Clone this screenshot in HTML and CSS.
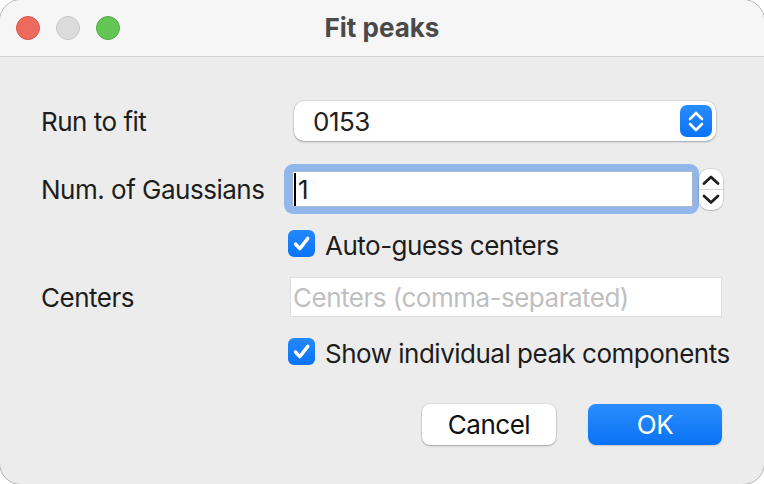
FILE: index.html
```html
<!DOCTYPE html>
<html>
<head>
<meta charset="utf-8">
<link rel="stylesheet" href="styles.css">
</head>
<body>
<div class="window">
  <div class="titlebar">
    <div class="lights">
      <span class="light red"></span>
      <span class="light gray"></span>
      <span class="light green"></span>
    </div>
    <div class="title">Fit peaks</div>
    <div></div>
  </div>
  <div class="content">
    <div class="row row1">
      <div class="label">Run to fit</div>
      <div class="popup">
        <span class="popup-text">0153</span>
        <span class="popup-arrows">
          <svg width="32" height="32" viewBox="0 0 32 32"><path d="M10 14 L16 8 L22 14 M10 19 L16 25 L22 19" fill="none" stroke="#fff" stroke-width="2.6" stroke-linecap="round" stroke-linejoin="round"/></svg>
        </span>
      </div>
    </div>
    <div class="row row2">
      <div class="label">Num. of Gaussians</div>
      <div class="focus-ring">
        <div class="field"><span class="caret"></span>1</div>
      </div>
      <div class="stepper">
        <svg width="24" height="41" viewBox="0 0 24 41"><path d="M5 14.5 L12 8 L19 14.5" fill="none" stroke="#1f1f1f" stroke-width="2.8" stroke-linecap="round" stroke-linejoin="round"/><path d="M5 27 L12 33.5 L19 27" fill="none" stroke="#1f1f1f" stroke-width="2.8" stroke-linecap="round" stroke-linejoin="round"/></svg>
      </div>
    </div>
    <div class="row row3">
      <div class="label"></div>
      <label class="check">
        <span class="box"><svg width="27" height="27" viewBox="0 0 27 27"><path d="M7.5 14 L11.8 18.6 L19.8 8.4" fill="none" stroke="#fff" stroke-width="3.4" stroke-linecap="round" stroke-linejoin="round"/></svg></span>
        <span class="check-text">Auto-guess centers</span>
      </label>
    </div>
    <div class="row row4">
      <div class="label">Centers</div>
      <div class="text-field"><span class="placeholder">Centers (comma-separated)</span></div>
    </div>
    <div class="row row5">
      <div class="label"></div>
      <label class="check">
        <span class="box"><svg width="27" height="27" viewBox="0 0 27 27"><path d="M7.5 14 L11.8 18.6 L19.8 8.4" fill="none" stroke="#fff" stroke-width="3.4" stroke-linecap="round" stroke-linejoin="round"/></svg></span>
        <span class="check-text">Show individual peak components</span>
      </label>
    </div>
    <div class="buttons">
      <button class="btn cancel">Cancel</button>
      <button class="btn ok">OK</button>
    </div>
  </div>
</div>
</body>
</html>
```
FILE: styles.css
```css
* { box-sizing: border-box; }
html, body {
  margin: 0;
  padding: 0;
  background: #ffffff;
  overflow: hidden;
  width: 764px;
  height: 484px;
}
body {
  font-family: Inter, "Liberation Sans", Arial, sans-serif;
  font-size: 26px;
  letter-spacing: -0.5px;
  color: #1d1d1d;
}
.window {
  margin: -1px;
  width: 766px;
  height: 486px;
  border: 1px solid #b4b4b4;
  border-radius: 22px;
  overflow: hidden;
  background: #ececec;
}
.titlebar {
  height: 57px;
  background: #f6f6f6;
  border-bottom: 1px solid #d3d3d3;
  display: grid;
  grid-template-columns: 1fr auto 1fr;
  align-items: center;
}
.lights {
  display: flex;
  gap: 16px;
  padding-left: 16px;
}
.light {
  width: 24px;
  height: 24px;
  border-radius: 50%;
  border: 1px solid;
}
.red { background: #ee6a5f; border-color: #d4574c; }
.gray { background: #dcdcdc; border-color: #c6c6c6; }
.green { background: #62c554; border-color: #52ab45; }
.title {
  font-weight: 700;
  font-size: 26px;
  letter-spacing: 0;
  color: #4a4a4a;
  padding-bottom: 2px;
}
.content {
  padding: 44px 0 0 41px;
}
.row {
  display: flex;
  align-items: center;
}
.label {
  width: 243px;
  flex: none;
  color: #1d1d1d;
}
.row1 { height: 40px; }
.row2 { height: 50px; margin-top: 23px; }
.row3 { height: 27px; margin-top: 16px; }
.row4 { height: 40px; margin-top: 20px; }
.row5 { height: 27px; margin-top: 21px; }

.popup {
  margin-left: 10px;
  width: 422px;
  height: 40px;
  background: #ffffff;
  border-radius: 10px;
  box-shadow: 0 1px 2px rgba(0,0,0,0.28), 0 0 0 0.5px rgba(0,0,0,0.12);
  display: flex;
  align-items: center;
  justify-content: space-between;
  padding: 0 4px 0 19px;
}
.popup-text { color: #222; }
.popup-arrows {
  width: 32px;
  height: 32px;
  border-radius: 7px;
  background: linear-gradient(#2a8dfe, #0873f5);
  display: flex;
}
.focus-ring {
  width: 415px;
  height: 50px;
  padding: 7px 6px 7px 8px;
  border-radius: 9px;
  background: #90b6ec;
}
.field {
  height: 36px;
  background: #fff;
  border: 1px solid #a9b8cc;
  display: flex;
  align-items: center;
  padding-left: 1px;
  color: #1d1d1d;
}
.caret {
  width: 2px;
  height: 33px;
  background: #000;
  margin-right: 2px;
}
.stepper {
  width: 24px;
  height: 41px;
  border-radius: 10px;
  background: linear-gradient(#fff 0, #fff 20px, #d8d8d8 20px, #d8d8d8 21px, #fff 21px);
  box-shadow: 0 0.5px 1.5px rgba(0,0,0,0.3), 0 0 0 0.5px rgba(0,0,0,0.12);
  display: flex;
}
.check {
  display: flex;
  align-items: center;
  margin-left: 4px;
}
.box {
  width: 27px;
  height: 27px;
  border-radius: 6px;
  background: linear-gradient(#2488fd, #0a74f6);
  display: flex;
  flex: none;
}
.check-text {
  margin-left: 10px;
  margin-top: 4px;
  color: #1d1d1d;
}
.text-field {
  margin-left: 6px;
  width: 432px;
  height: 40px;
  background: #fff;
  border: 1px solid #dedede;
  display: flex;
  align-items: center;
  padding-left: 2px;
}
.placeholder { color: #bfbfbf; }
.buttons {
  display: flex;
  justify-content: flex-end;
  gap: 32px;
  margin-top: 39px;
  padding-right: 42px;
}
.btn {
  width: 134px;
  height: 41px;
  border: none;
  border-radius: 8px;
  font-family: Inter, "Liberation Sans", Arial, sans-serif;
  font-size: 26px;
  letter-spacing: -0.5px;
  padding: 0;
}
.cancel {
  background: #fff;
  color: #111;
  box-shadow: 0 1px 2px rgba(0,0,0,0.28), 0 0 0 0.5px rgba(0,0,0,0.12);
}
.ok {
  background: linear-gradient(#2a8dfe, #0a72f5);
  color: #fff;
  box-shadow: 0 1px 1.5px rgba(0,0,0,0.15);
}
```
